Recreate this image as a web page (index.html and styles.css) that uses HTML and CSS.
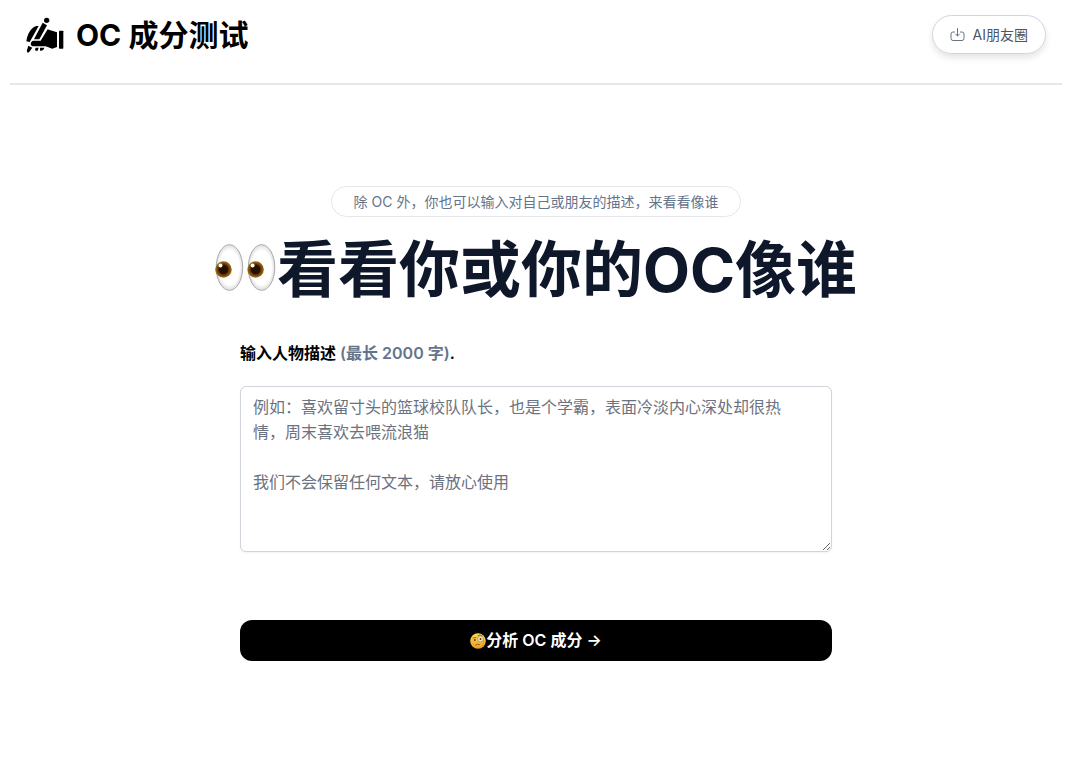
FILE: index.html
```html
<!DOCTYPE html>
<html lang="zh-CN">
<head>
    <meta charset="UTF-8">
    <meta name="viewport" content="width=device-width, initial-scale=1.0">
    <title>OC 成分测试</title>
    <link rel="stylesheet" href="styles.css">
</head>
<body>
    <header class="header">
        <a class="logo" href="#">
            <svg class="logo-icon" viewBox="5 7 114 108" aria-hidden="true">
                <circle cx="67" cy="17" r="8"/>
                <path d="M55 24 L68 32 L45 74 H29 Z"/>
                <path d="M36 34 C20 39 9 57 6 80 L16 82 L43 34 Z"/>
                <path d="M70 44 L76 46 L98 53 V97 L84 102 L64 95 H26 C17 94 17 79 28 78 H49 Z"/>
                <rect x="104" y="48" width="13" height="54" rx="2"/>
                <path d="M12 93 L24 99 L14 113 Q6 116 8 106 Z"/>
                <path d="M34 99 H43 L40 108 Q29 110 34 99 Z"/>
                <path d="M47 99 H60 Q58 109 47 108 Z"/>
            </svg>
            <span class="logo-text">OC 成分测试</span>
        </a>
        <a class="header-link" href="#">
            <svg class="link-icon" viewBox="0 0 15 15" aria-hidden="true">
                <path d="M4.5 5 H3 Q1 5 1 7 V11.5 Q1 13.5 3 13.5 H12 Q14 13.5 14 11.5 V7 Q14 5 12 5 H10.5 M7.5 1.5 V9 M5.5 7 L7.5 9 L9.5 7"/>
            </svg>
            <span>AI朋友圈</span>
        </a>
    </header>
    <main class="main">
        <p class="notice">除 OC 外，你也可以输入对自己或朋友的描述，来看看像谁</p>
        <h1 class="title">
            <svg class="eyes" viewBox="27 38 186 148" role="img" aria-label="眼睛">
                <defs>
                    <radialGradient id="white">
                        <stop offset="0.75" stop-color="#fff"/>
                        <stop offset="1" stop-color="#dcdcde"/>
                    </radialGradient>
                    <radialGradient id="iris">
                        <stop offset="0.5" stop-color="#301300"/>
                        <stop offset="0.65" stop-color="#66350a"/>
                        <stop offset="1" stop-color="#a87518"/>
                    </radialGradient>
                </defs>
                <g id="eye">
                    <ellipse cx="70" cy="112" rx="40" ry="69" fill="url(#white)" stroke="#aaa" stroke-width="3"/>
                    <circle cx="52" cy="118" r="25" fill="url(#iris)"/>
                    <circle cx="52" cy="118" r="13" fill="#241000"/>
                    <circle cx="43" cy="106" r="6" fill="#fff"/>
                </g>
                <use href="#eye" x="97"/>
            </svg>
            <span>看看你或你的OC像谁</span>
        </h1>
        <form class="form">
            <label class="label" for="description">输入人物描述 <span class="hint">(最长 2000 字)</span>.</label>
            <textarea class="description" id="description" name="description" rows="6" maxlength="2000" placeholder="例如：喜欢留寸头的篮球校队队长，也是个学霸，表面冷淡内心深处却很热情，周末喜欢去喂流浪猫&#10;&#10;我们不会保留任何文本，请放心使用"></textarea>
            <button class="submit" type="button">
                <svg class="face" viewBox="0 0 16 16" aria-hidden="true">
                    <defs>
                        <linearGradient id="skin" x2="0" y2="1">
                            <stop offset="0" stop-color="#ffdc52"/>
                            <stop offset="1" stop-color="#ed9b20"/>
                        </linearGradient>
                    </defs>
                    <circle cx="8" cy="8" r="7.8" fill="url(#skin)"/>
                    <circle cx="10.5" cy="6" r="3" fill="#eee2bb" stroke="#a8946a" stroke-width="0.8"/>
                    <circle cx="10.5" cy="6" r="0.9" fill="#543414"/>
                    <circle cx="4.8" cy="7" r="0.9" fill="#543414"/>
                    <path d="M3 5 L6 4.5 M8 2.5 Q10 1.2 12 2.5 M5.5 12 Q7.5 10.5 9.5 11.5" fill="none" stroke="#80501a" stroke-width="0.8" stroke-linecap="round"/>
                    <path d="M13.3 7 Q14.5 10 12.5 13" fill="none" stroke="#b79245" stroke-width="0.6"/>
                </svg>
                <span>分析 OC 成分 →</span>
            </button>
        </form>
    </main>
</body>
</html>
```
FILE: styles.css
```css
* {
    box-sizing: border-box;
}
body {
    font-family: Inter, "Noto Sans CJK SC", sans-serif;
    font-size: 16px;
    line-height: 25px;
    color: #000;
    background-color: #fff;
    margin: 0;
    padding: 0 18px 0 10px;
}
.header {
    display: flex;
    justify-content: space-between;
    align-items: center;
    padding: 15px 16px 29px;
    border-bottom: 2px solid #e5e7eb;
}
.logo {
    display: flex;
    align-items: center;
    gap: 12px;
    color: #000;
    text-decoration: none;
}
.logo-icon {
    width: 38px;
    height: 36px;
}
.logo-text {
    font-size: 30px;
    line-height: 36px;
    font-weight: 700;
}
.header-link {
    display: flex;
    align-items: center;
    gap: 8px;
    padding: 6px 17px;
    border: 1px solid #d1d5db;
    border-radius: 20px;
    box-shadow: 0 4px 6px rgba(0, 0, 0, 0.1);
    color: #4b5563;
    font-size: 14px;
    text-decoration: none;
}
.header-link:hover {
    background-color: #f3f4f6;
}
.link-icon {
    width: 15px;
    height: 15px;
    fill: none;
    stroke: #6b7280;
    stroke-linecap: round;
    stroke-linejoin: round;
}
.main {
    display: flex;
    flex-direction: column;
    align-items: center;
    padding: 101px 0 48px;
}
.notice {
    margin: 0 0 22px;
    padding: 2px 22px;
    border: 1px solid #e5e7eb;
    border-radius: 16px;
    color: #64748b;
    font-size: 14px;
}
.title {
    display: flex;
    align-items: flex-start;
    margin: 0 0 40px;
    color: #0f172a;
    font-size: 61px;
    line-height: 62px;
    font-weight: 700;
}
.eyes {
    width: 62px;
    height: 49px;
    margin-top: 4px;
}
.form {
    display: flex;
    flex-direction: column;
    width: 100%;
    max-width: 592px;
}
.label {
    margin-bottom: 20px;
    font-weight: 600;
}
.hint {
    color: #64748b;
}
.description {
    width: 100%;
    margin-bottom: 68px;
    padding: 8px 24px 6px 12px;
    border: 1px solid #d1d5db;
    border-radius: 6px;
    box-shadow: 0 1px 2px rgba(0, 0, 0, 0.05);
    font: inherit;
    resize: vertical;
}
.description::placeholder {
    color: #6b7280;
}
.submit {
    display: flex;
    justify-content: center;
    align-items: center;
    padding: 8px 16px;
    border: none;
    border-radius: 12px;
    background-color: #000;
    color: #fff;
    font: inherit;
    font-weight: 600;
    cursor: pointer;
}
.submit:hover {
    background-color: #333;
}
.face {
    width: 16px;
    height: 16px;
}
```
